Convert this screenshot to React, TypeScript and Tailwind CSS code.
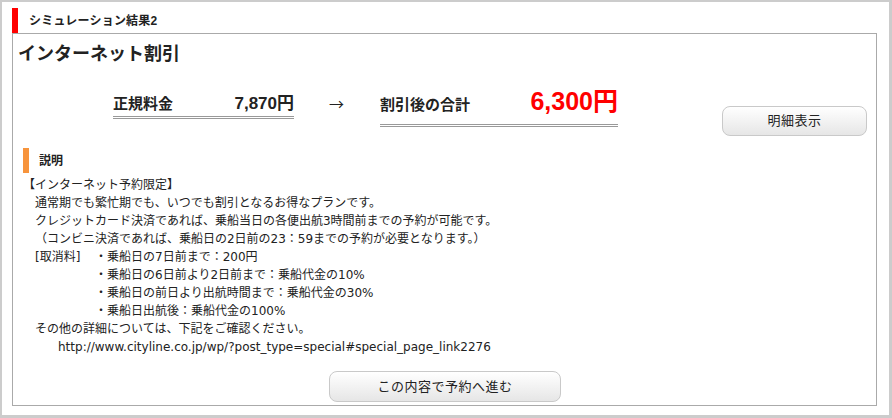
import React from "react";

const font = "font-['Liberation_Sans','Noto_Sans_CJK_JP',sans-serif]";
const body = "font-['DejaVu_Sans','Noto_Sans_CJK_JP',sans-serif]";

function Btn({ children, className }: { children: React.ReactNode; className?: string }) {
  return (
    <button
      className={`flex items-center justify-center rounded-[8px] border border-[#c9c9c9] bg-gradient-to-b from-white to-[#e6e6e6] text-[13px] text-[#222] tracking-[0.5px] ${className ?? ""}`}
    >
      {children}
    </button>
  );
}

export default function App() {
  return (
    <div
      className={`${font} w-[892px] h-[418px] bg-white border-t-2 border-l-2 border-r-[3px] border-b-[3px] border-[#cccccc] pl-[10px] pt-[6px] text-[#333]`}
    >
      {/* header */}
      <div className="flex items-center h-[25px]">
        <div className="w-[6px] h-[25px] bg-[#ff0000]" />
        <div className="ml-[11px] text-[12px] font-bold text-[#222] leading-none tracking-[0.2px]">シミュレーション結果2</div>
      </div>

      {/* box */}
      <div className="w-[865px] h-[373px] border border-[#aaaaaa] flex flex-col">
        <div className="pl-[5px] pt-[8px] text-[18px] leading-[24px] font-bold text-[#222]">インターネット割引</div>

        {/* price row */}
        <div className="flex items-start mt-[22px] pl-[100px] pr-[9px]">
          <div className="mt-[6px] w-[181px] flex items-baseline justify-between pb-[2px] border-b-[3px] border-double border-[#999]">
            <span className="text-[15px] leading-[20px] font-bold text-[#222]">正規料金</span>
            <span className="text-[17px] leading-[20px] font-bold text-[#222]">7,870円</span>
          </div>
          <div className="mt-[6px] ml-[35px] w-[16px] font-['Noto_Sans_CJK_JP',sans-serif] text-[15px] leading-[20px] text-[#222]">→</div>
          <div className="ml-[35px] w-[238px] flex items-baseline justify-between pb-[6px] border-b-[3px] border-double border-[#999]">
            <span className="text-[15px] leading-[26px] font-bold text-[#222]">割引後の合計</span>
            <span className="text-[25px] leading-[26px] font-bold text-[#ff0000]">6,300円</span>
          </div>
          <Btn className="ml-auto mt-[18px] w-[145px] h-[30px]">明細表示</Btn>
        </div>

        {/* description */}
        <div className="mt-[12px] pl-[10px] flex items-center h-[25px]">
          <div className="w-[6px] h-[25px] bg-[#f7943c]" />
          <div className="ml-[10px] text-[12px] font-bold text-[#222]">説明</div>
        </div>
        <div className={`${body} mt-[3px] pl-[10px] text-[12px] leading-[18px] text-[#222]`}>
          <div>【インターネット予約限定】</div>
          <div className="pl-[12px]">通常期でも繁忙期でも、いつでも割引となるお得なプランです。</div>
          <div className="pl-[12px]">クレジットカード決済であれば、乗船当日の各便出航3時間前までの予約が可能です。</div>
          <div className="pl-[12px]">（コンビニ決済であれば、乗船日の2日前の23：59までの予約が必要となります。）</div>
          <div className="pl-[12px] flex">
            <span className="w-[60px]">[取消料]</span>
            <span>・乗船日の7日前まで：200円</span>
          </div>
          <div className="pl-[72px]">・乗船日の6日前より2日前まで：乗船代金の10%</div>
          <div className="pl-[72px]">・乗船日の前日より出航時間まで：乗船代金の30%</div>
          <div className="pl-[72px]">・乗船日出航後：乗船代金の100%</div>
          <div className="pl-[12px]">その他の詳細については、下記をご確認ください。</div>
          <div className="pl-[35px]">http://www.cityline.co.jp/wp/?post_type=special#special_page_link2276</div>
        </div>
        <div className="mt-[15px] flex pl-[316px]">
          <Btn className="w-[232px] h-[31px]">この内容で予約へ進む</Btn>
        </div>
      </div>
    </div>
  );
}
